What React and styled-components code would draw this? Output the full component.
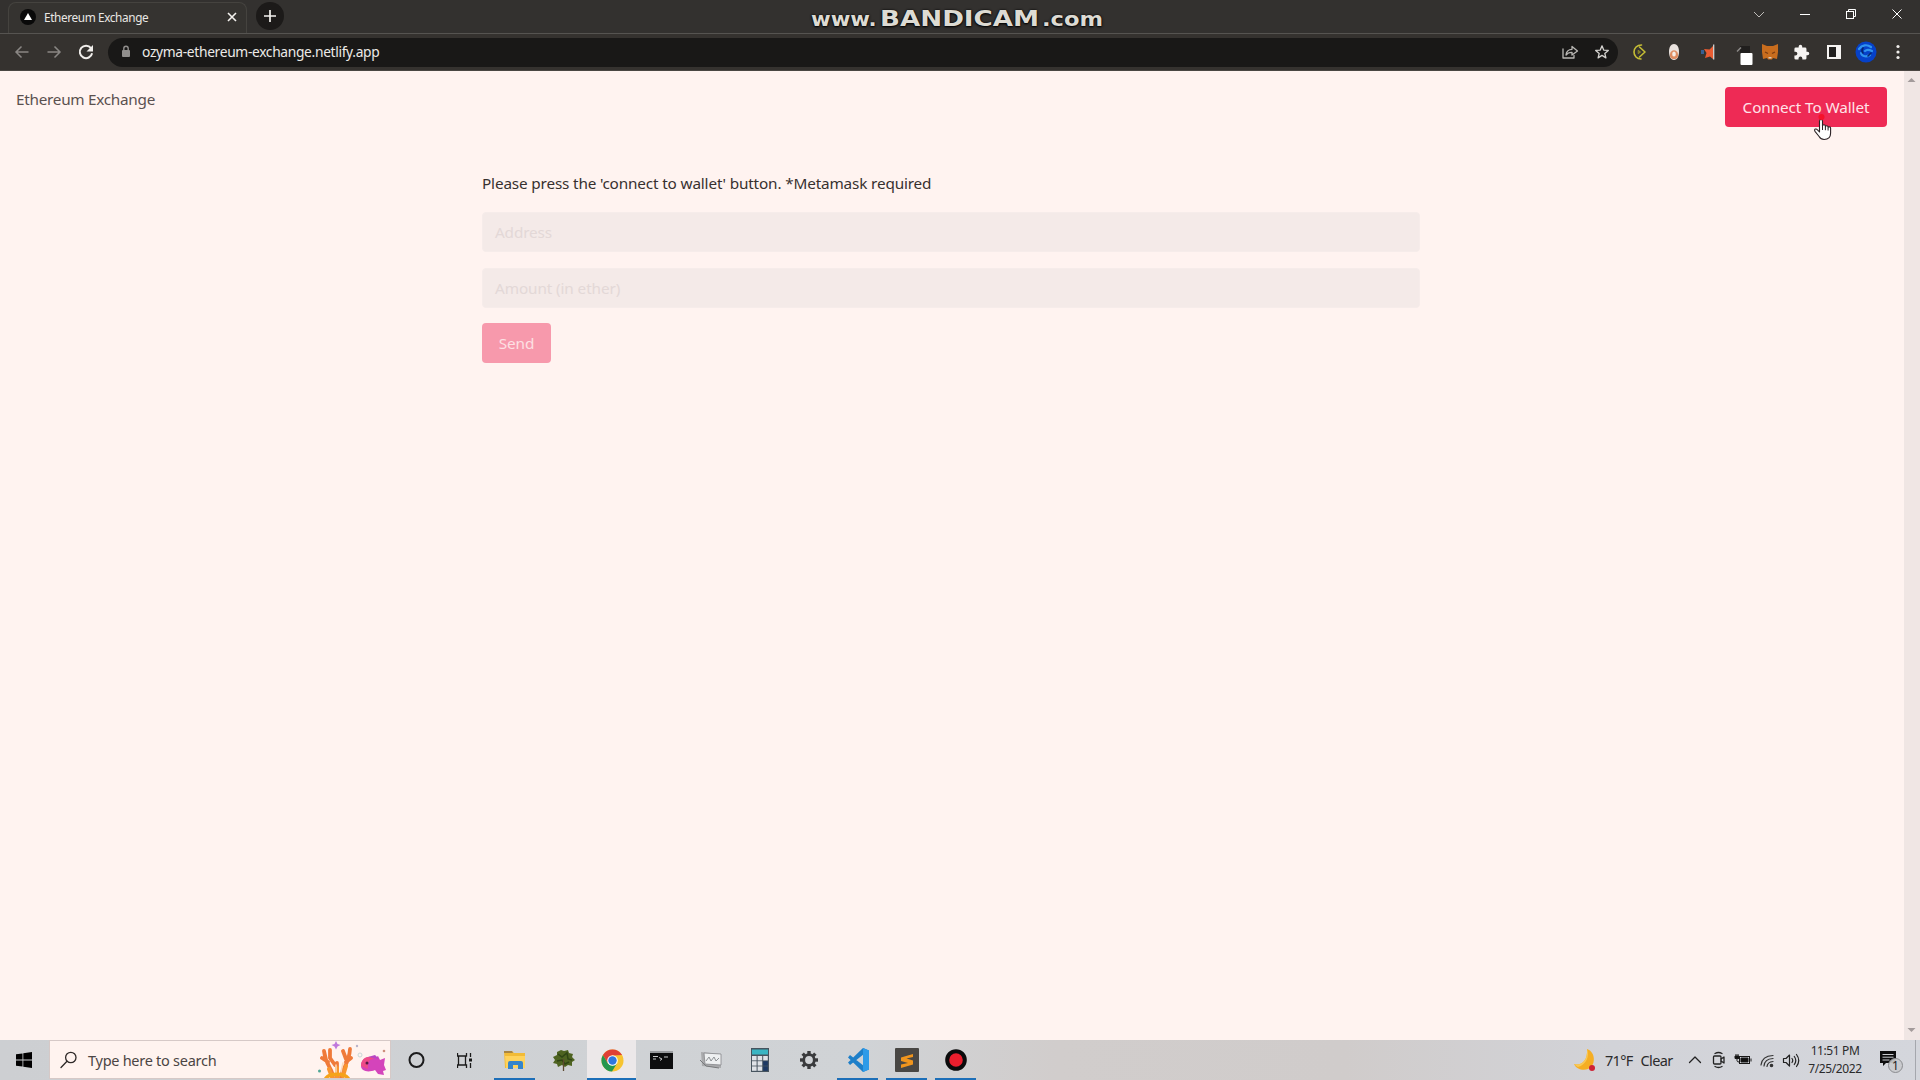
import React from "react";
import styled, { createGlobalStyle } from "styled-components";

const Global = createGlobalStyle`
  * { box-sizing: border-box; }
  body { margin: 0; background: #fff3f0; font-family: "Noto Sans", "Open Sans", sans-serif; overflow: hidden; }
`;

const Screen = styled.div`
  width: 1920px;
  height: 1080px;
  display: flex;
  flex-direction: column;
  position: relative;
  overflow: hidden;
`;

const Label = styled.span`
  white-space: nowrap;
  font-size: ${(p) => p.$size || 15.3}px;
  letter-spacing: ${(p) => p.$track || 0}px;
  color: ${(p) => p.$color || "inherit"};
`;

/* ---------- browser chrome ---------- */

const TitleBar = styled.header`
  height: 33px;
  flex: none;
  display: flex;
  align-items: flex-start;
  background: #33312f;
  padding-left: 8px;
`;

const Tab = styled.div`
  width: 239px;
  height: 31px;
  margin-top: 2px;
  border: 1px solid #45433f;
  border-bottom: 0;
  border-radius: 8px 8px 0 0;
  background: #353330;
  display: flex;
  align-items: center;
  padding: 0 8px 2px 11px;
`;

const TabTitle = styled.div`
  flex: 1;
  padding-left: 8px;
  color: #e9e7e4;
  line-height: 16px;
  display: flex;
`;

const NewTab = styled.div`
  width: 28px;
  height: 28px;
  margin: 2px 0 0 9px;
  border-radius: 50%;
  background: #1c1a19;
  display: grid;
  place-items: center;
`;

const WindowButtons = styled.div`
  margin-left: auto;
  height: 28px;
  display: flex;
  align-items: center;
`;

const WindowButton = styled.div`
  width: 46px;
  height: 28px;
  display: grid;
  place-items: center;
`;

const Toolbar = styled.div`
  height: 38px;
  flex: none;
  display: flex;
  align-items: center;
  background: #35322f;
  border-top: 1px solid #565451;
  border-bottom: 1px solid #4a4642;
  padding: 0 6px;
`;

const NavCell = styled.div`
  flex: none;
  width: 32px;
  height: 32px;
  display: grid;
  place-items: center;
`;

const UrlBar = styled.div`
  flex: none;
  width: 1510px;
  height: 29px;
  margin-left: 6px;
  border-radius: 15px;
  background: #191817;
  color: #eceae7;
  display: flex;
  align-items: center;
  padding-left: 13px;
`;

const UrlText = styled.div`
  flex: 1;
  padding: 0 0 1px 11px;
  line-height: 18px;
`;

const Extensions = styled.div`
  display: flex;
  align-items: center;
  margin-left: 5px;
`;

const Watermark = styled.div`
  position: absolute;
  top: 8px;
  left: 811px;
  display: flex;
  align-items: baseline;
  line-height: 22px;
  color: #dddbd3;
  font-family: "DejaVu Sans", sans-serif;
  font-weight: bold;
  text-shadow: 0 1px 2px #000, 0 0 2px #000;
`;

const Mark = styled.span`
  display: block;
  white-space: nowrap;
  width: ${(p) => p.$width}px;
  font-size: ${(p) => p.$size}px;
  transform: scaleX(${(p) => p.$stretch});
  transform-origin: left;
`;

/* ---------- page ---------- */

const Viewport = styled.div`
  flex: 1;
  display: flex;
  background: #fff3f0;
`;

const Page = styled.div`
  flex: 1;
  display: flex;
  flex-direction: column;
`;

const NavBar = styled.nav`
  height: 72px;
  display: flex;
  justify-content: space-between;
  align-items: flex-start;
  padding: 16px 17px 0 16px;
`;

const Brand = styled.div`
  color: #5a504f;
  line-height: 24px;
`;

const Button = styled.button`
  height: 40px;
  width: ${(p) => p.$width}px;
  border: 0;
  padding: 0;
  border-radius: 4px;
  font: 16px "Noto Sans", sans-serif;
  line-height: 24px;
  color: ${(p) => (p.$muted ? "#fde0e3" : "#ffe3e8")};
  background: ${(p) => (p.$muted ? "#f799ac" : "#ee2a55")};
`;

const Form = styled.form`
  width: 938px;
  margin: 28px 0 0 482px;
  display: flex;
  flex-direction: column;
  align-items: flex-start;
  gap: 15.5px;
`;

const Hint = styled.div`
  line-height: 24px;
  color: #37302f;
  margin-bottom: 1.5px;
`;

const Field = styled.div`
  width: 938px;
  height: 40px;
  border-radius: 4px;
  background: #f4eae8;
  border: 1px solid #f6ecea;
  color: #e3d8d7;
  padding: 0 12px;
  line-height: 39px;
`;

const ScrollTrack = styled.div`
  width: 16px;
  background: #f0e6e4;
  display: flex;
  flex-direction: column;
  align-items: center;
  justify-content: space-between;
  padding: 6px 1px 7px 0;
`;

/* ---------- taskbar ---------- */

const TaskBar = styled.footer`
  height: 40px;
  flex: none;
  display: flex;
  align-items: stretch;
  color: #2b2b2c;
  background: linear-gradient(90deg, #cdcfd2 0, #d0d3d6 45%, #d1cdcc 55%, #d0cccb 70%, #d2d3d8 84%, #d4d6dc 100%);
`;

const Start = styled.div`
  flex: none;
  width: 49px;
  padding-right: 1px;
  display: grid;
  place-items: center;
`;

const Search = styled.div`
  flex: none;
  width: 342px;
  height: 39px;
  background: #fff3ef;
  border: 1px solid #d6c9c7;
  display: flex;
  align-items: center;
  padding-left: 10px;
`;

const SearchText = styled.div`
  flex: 1;
  padding-left: 10px;
  color: #4b4544;
  line-height: 22px;
`;

const Task = styled.div`
  flex: none;
  width: 49px;
  padding-left: 2px;
  display: grid;
  place-items: center;
  background: ${(p) => (p.$active ? "#ece8e9" : "transparent")};
  box-shadow: ${(p) => (p.$active ? "inset 0 -2px #1d6fb8" : "none")};
`;

const Running = styled.div`
  width: 41px;
  height: 40px;
  display: grid;
  place-items: center;
  border-bottom: 2px solid #1d6fb8;
  padding-top: 2px;
`;

const Tray = styled.div`
  margin-left: auto;
  display: flex;
  align-items: center;
`;

const Weather = styled.div`
  display: flex;
  align-items: center;
  gap: 8px;
  width: 109px;
`;

const TrayCell = styled.div`
  display: grid;
  place-items: center;
`;

const Clock = styled.div`
  width: 68px;
  display: flex;
  flex-direction: column;
  align-items: center;
  line-height: 18px;
`;

const Notice = styled.div`
  width: 46px;
  padding-right: 2px;
  display: grid;
  place-items: center;
`;

const Peek = styled.div`
  width: 5px;
  align-self: stretch;
  border-left: 1px solid #a5a7ad;
`;

const Pointer = styled.div`
  position: absolute;
  left: 1813px;
  top: 113px;
  line-height: 0;
`;

const line = { fill: "none", strokeLinecap: "round", strokeLinejoin: "round" };

const Favicon = () => (
  <svg width="16" height="16" viewBox="0 0 16 16">
    <circle cx="8" cy="8" r="8" fill="#090909" />
    <path d="M8 4l4 7H4z" fill="#fff" />
  </svg>
);

const Arrow = ({ flip }) => (
  <svg width="16" height="16" viewBox="0 0 16 16" stroke="#8a8784" strokeWidth="1.5" fill="none">
    <path d={flip ? "M1.5 8h12.5M8.5 2.5L14 8l-5.500 5.500" : "M14.500 8H2M7.500 2.500L2 8l5.500 5.500"} />
  </svg>
);

const Reload = () => (
  <svg width="18" height="18" viewBox="0 0 18 18">
    <path d="M14 5.200A6.200 6.200 0 1 0 15.100 10.200" fill="none" stroke="#f0eeeb" strokeWidth="2" />
    <path d="M16 2v6.500H9.500z" fill="#f0eeeb" />
  </svg>
);

const Lock = () => (
  <svg width="10" height="14" viewBox="0 0 10 14">
    <rect x="1" y="5" width="8" height="7" rx="1" fill="#918f8d" />
    <path d="M2.800 5V3.500a2.200 2.200 0 0 1 4.400 0V5" fill="none" stroke="#918f8d" strokeWidth="1.400" />
  </svg>
);

const Share = () => (
  <svg width="18" height="16" viewBox="0 0 18 16" {...line} stroke="#b9b7b4" strokeWidth="1.300">
    <path d="M2 5v9h11v-2.500" />
    <path d="M5 11c.4-4 2.600-5.600 6-5.700V2.500L16.500 7 11 11V8.300C8.500 8.200 6.500 9 5 11z" />
  </svg>
);

const Star = () => (
  <svg width="16" height="16" viewBox="0 0 16 16" {...line} stroke="#d5d3d0" strokeWidth="1.300">
    <path d="M8 1.800l1.700 4.300 4.600.3-3.500 3 1.100 4.500L8 11.400l-3.900 2.500 1.100-4.500-3.500-3 4.600-.3z" />
  </svg>
);

const extensionIcons = [
  { w: 34, icon: (
    <svg width="18" height="18" viewBox="0 0 18 18" {...line} stroke="#c5bd35" strokeWidth="1.600">
      <path d="M10.500 2C6 2 3 5 3 9s3 7 7 7" />
      <path d="M8.500 4L14 9l-5.500 5" />
      <path d="M7.500 7.500L9.500 9l-2 1.500z" fill="#8d8927" stroke="#8d8927" strokeWidth="1" />
    </svg>) },
  { w: 34, icon: (
    <svg width="14" height="18" viewBox="0 0 14 18">
      <path d="M7 1c3 0 5 3 5 7.500S10.500 17 7 17s-5-4-5-8.500S4 1 7 1z" fill="#e9e2de" />
      <path d="M3 11c1-5 7-5 8 0 .5 3-1 5-4 5s-4.500-2-4-5z" fill="#dd8d62" />
      <ellipse cx="7" cy="11" rx="1.800" ry="2.600" fill="#f4ece6" />
    </svg>) },
  { w: 34, icon: (
    <svg width="18" height="18" viewBox="0 0 18 18">
      <path d="M2 7h3v4H2z" fill="#365f94" />
      <path d="M14 3v13l-3-2.500-5 1.500 1.500-5L5 6l5.500.5z" fill="#e95c32" />
      <path d="M14.700 1.500v15" stroke="#ddd" strokeWidth="1.200" />
    </svg>) },
  { w: 29, icon: (
    <svg width="28" height="28" viewBox="0 0 28 28">
      <path d="M14 8h10v7H14z" fill="#211f1e" />
      <path d="M11 13.500l4-4" stroke="#8d8b88" strokeWidth="1.500" />
      <rect x="14.500" y="15" width="12" height="12" rx="1" fill="#fff" />
    </svg>) },
  { w: 32, icon: (
    <svg width="18" height="16" viewBox="0 0 18 16">
      <path d="M1 0l5 2h6l5-2v8l-1 7-4-1-1 1.500H7L6 14l-4 1-1-7z" fill="#c96d1e" />
      <path d="M4 8l3 1.500M14 8l-3 1.500" stroke="#7a3c12" strokeWidth="1.300" />
      <path d="M7.500 13h3v1.500h-3z" fill="#d8c9b8" />
    </svg>) },
  { w: 31, icon: (
    <svg width="17" height="17" viewBox="0 0 24 24" fill="#f6f4f2">
      <path d="M20.500 11H19V7a2 2 0 0 0-2-2h-4V3.500a2.500 2.500 0 0 0-5 0V5H4a2 2 0 0 0-2 2v3.800h1.500a2.700 2.700 0 0 1 0 5.400H2V20a2 2 0 0 0 2 2h3.800v-1.500a2.700 2.700 0 0 1 5.400 0V22H17a2 2 0 0 0 2-2v-4h1.500a2.500 2.500 0 0 0 0-5z" />
    </svg>) },
  { w: 33, icon: (
    <svg width="16" height="16" viewBox="0 0 16 16">
      <rect x="2" y="2" width="12" height="12" fill="#22201f" stroke="#f6f4f2" strokeWidth="2" />
      <rect x="10" y="2" width="4" height="12" fill="#f6f4f2" />
    </svg>) },
  { w: 32, icon: (
    <svg width="22" height="22" viewBox="0 0 22 22">
      <circle cx="11" cy="11" r="10.500" fill="#0641c8" />
      <path d="M4 8c3-4 8-5 12-2M6 12c1 4 6 4 9 2M10 10c2-2 5-1 7 0" {...line} stroke="#3093ee" strokeWidth="2.200" />
      <path d="M8 7q-2 3 0 5M13 15l3-3" {...line} stroke="#06236e" strokeWidth="1.600" />
    </svg>) },
  { w: 32, icon: (
    <svg width="4" height="16" viewBox="0 0 4 16" fill="#f0eeeb">
      <circle cx="2" cy="2.500" r="1.600" /><circle cx="2" cy="8" r="1.600" /><circle cx="2" cy="13.500" r="1.600" />
    </svg>) },
];

const windowIcons = [
  <path key="c" d="M1 4l5 5 5-5" stroke="#bdbbb8" />,
  <path key="m" d="M1 6.500h10" stroke="#fff" />,
  <g key="r" stroke="#fff"><rect x="1.500" y="3.500" width="7" height="7" /><path d="M3.500 3.500v-2h7v7h-2" /></g>,
  <path key="x" d="M1.500 1.500l9 9M10.500 1.500l-9 9" stroke="#fff" />,
];

const Windows = () => (
  <svg width="16" height="16" viewBox="0 0 16 16" fill="#000">
    <path d="M0 2.300L6.500 1.400v6.200H0zM7.300 1.300L16 0v7.600H7.300zM0 8.400h6.500v6.200L0 13.700zM7.300 8.400H16V16l-8.700-1.300z" />
  </svg>
);

const Magnifier = () => (
  <svg width="18" height="18" viewBox="0 0 18 18" {...line} stroke="#2e2928" strokeWidth="1.300">
    <circle cx="10.800" cy="6.500" r="5.200" /><path d="M7 10.300L1 16.500" />
  </svg>
);

const Reef = () => (
  <svg width="72" height="37" viewBox="0 0 72 37">
    <g {...line}>
      <path d="M19 37V22M15 37C15 27 8 26 6 10M10 21L4 17M23 37C23 27 31 25 32 8M33 17l-5 4M25 10l3 8M12 9v8l5 7" stroke="#ef7a3a" strokeWidth="3.800" />
      <path d="M19 36V27M14 36l-3-8M25 35l3-10" stroke="#f9962f" strokeWidth="4" />
      <path d="M18 33v-9M23 31l2-9" stroke="#fbd9b8" strokeWidth="1.500" />
      <path d="M8 37c4-5 18-5 22 0" stroke="#f5a31a" strokeWidth="3.500" />
    </g>
    <path d="M18 0l1.500 3 3 1-3 1.500-1.500 3-1.500-3-3-1.500 3-1z" fill="#bf78dc" />
    <circle cx="1.500" cy="30" r="1.500" fill="#4fa796" />
    <circle cx="39" cy="5" r="1.200" fill="#b9b3c9" /><circle cx="42" cy="14" r="2" fill="none" stroke="#c9d7d6" />
    <circle cx="66" cy="10" r="1.300" fill="#cd8e7c" />
    <path d="M43 25c0-7 6-11 14-8l3-2 2 4 5-2-1 7 2 5-3 1 1 4-6-1-3-4c-7 3-14 1-14-4z" fill="#d444bb" />
    <path d="M43 25c0-8 7-11 14-8-5 1-8 4-7 11z" fill="#ee4c88" />
    <path d="M50 16l7-2 4 4z" fill="#b847c4" />
    <circle cx="49" cy="22" r="1.500" fill="#571b45" />
  </svg>
);

const TaskView = () => (
  <svg width="17" height="17" viewBox="0 0 17 17" fill="none" stroke="#1a1a1a" strokeWidth="1.300">
    <path d="M.5 1v3h9V1M.5 16v-3h9v3M1.500 4v9M8.500 4v9M13.500 1v4M13.500 11v5" />
    <path d="M13.500 6.500v3" strokeWidth="3" />
  </svg>
);

const Folder = () => (
  <svg width="24" height="20" viewBox="0 0 24 20">
    <path d="M1 1h8l2 2h11v15H2z" fill="#f2bb36" />
    <path d="M1 1h8l1 2H1z" fill="#a98543" />
    <path d="M2 6h20v12H3z" fill="#ffd35d" />
    <path d="M5 19v-6q0-2 2-2h11q2 0 2 2v6h-5v-4h-5v4z" fill="#3585cc" />
  </svg>
);

const Tree = () => (
  <svg width="24" height="24" viewBox="0 0 24 24">
    <path d="M9 2l3 1 4-1 1 3 4 1-1 3 3 3-3 2 0 4-4-1-3 2-3-2-4 2-1-3-4-1 2-3-2-3 4-2 0-3z" fill="#4e6321" />
    <path d="M6 6l4 3 5-4 1 6 4 1M5 13l5-1 3 4 4-2" stroke="#2f4514" strokeWidth="1.500" fill="none" />
    <path d="M11.500 11v12" stroke="#5d4a31" strokeWidth="1.300" />
  </svg>
);

const ChromeLogo = () => (
  <svg width="23" height="23" viewBox="0 0 48 48">
    <circle cx="24" cy="24" r="23" fill="#f7c431" />
    <path d="M4 12.500A23 23 0 0 1 44 12.500L24 13.500 14 29z" fill="#df4036" />
    <path d="M4 12.500A23 23 0 0 0 23 47L33.500 29.500 24 34.500 14.500 30z" fill="#24974e" />
    <circle cx="24" cy="24" r="11" fill="#fff" />
    <circle cx="24" cy="24" r="8.800" fill="#2f77df" />
  </svg>
);

const Terminal = () => (
  <svg width="23" height="18" viewBox="0 0 23 18">
    <rect width="23" height="18" fill="#0d0e0f" />
    <path d="M0 0h23v2H0z" fill="#9a9da0" />
    <path d="M3 5.500h5M9 6.500l3 1.500-2 1.500M14 6h4M3 8h3" stroke="#c9cacb" fill="none" />
  </svg>
);

const Monitor = () => (
  <svg width="24" height="20" viewBox="0 0 24 20">
    <path d="M2 2l20 2v14L3 16z" fill="#a9aaac" />
    <path d="M5 3l17 1v11L6 14z" fill="#eef0f1" stroke="#85878a" strokeWidth=".8" />
    <path d="M7 11l3-4 2 4 3-4 2 4 3-3" stroke="#8d9194" fill="none" />
    <path d="M1 10l6 6 13 2" stroke="#77797b" fill="none" />
  </svg>
);

const Calculator = () => (
  <svg width="19" height="24" viewBox="0 0 19 24">
    <rect x="1" y="0" width="18" height="24" fill="#47545f" />
    <rect x="2" y="1.500" width="16" height="5" fill="#39b5c3" />
    {[0, 1, 2].flatMap((r) => [0, 1, 2].map((c) => (
      <rect key={`${r}${c}`} x={2 + c * 5.600} y={8 + r * 5.200} width="4.600" height="4.400" fill={c === 2 && r > 0 ? "#1c3964" : "#dfe3e8"} />
    )))}
  </svg>
);

const Gear = () => (
  <svg width="20" height="20" viewBox="0 0 20 20" stroke="#3a3b3d">
    <circle cx="10" cy="10" r="5.300" fill="none" strokeWidth="2.800" />
    {[0, 45, 90, 135, 180, 225, 270, 315].map((a) => (
      <path key={a} d="M10 1v3.500" strokeWidth="3.400" transform={`rotate(${a} 10 10)`} />
    ))}
  </svg>
);

const VsCode = () => (
  <svg width="24" height="24" viewBox="0 0 24 24">
    <path d="M17 0l6 2.500v19L17 24 2 9.500 4 7l14 11V6L4 17l-2-2.500z" fill="#1d7fc9" />
    <path d="M17 0l6 2.500v19L17 24z" fill="#2e9be8" />
  </svg>
);

const Sublime = () => (
  <svg width="24" height="24" viewBox="0 0 24 24">
    <rect width="24" height="24" rx="1" fill="#494744" />
    <path d="M18 6L6 9.500v3.500l7 2-7 1.500V20l12-3.500v-4L11.500 10.500 18 9z" fill="#f0951d" />
  </svg>
);

const Recorder = () => (
  <svg width="24" height="24" viewBox="0 0 24 24">
    <circle cx="12" cy="12" r="8.800" fill="#ea1e2d" stroke="#0b0b0c" strokeWidth="4" />
  </svg>
);

const Cortana = () => (
  <svg width="18" height="18" viewBox="0 0 18 18">
    <circle cx="8.500" cy="9" r="7" fill="none" stroke="#1c1c1d" strokeWidth="2" />
  </svg>
);

const Moon = () => (
  <svg width="24" height="24" viewBox="0 0 24 24">
    <path d="M14 1c9 3 9 17 1 20-5 2-12 0-14-5 7 2 14-3 13-15z" fill="#f5ae24" />
    <path d="M14 1c3 7-1 16-9 18-2-1-3-2-4-3 7 2 14-3 13-15z" fill="#f9c955" />
    <circle cx="19" cy="20" r="3" fill="#cf2336" />
  </svg>
);

const traySymbols = [
  { w: 25, icon: <svg width="14" height="14" viewBox="0 0 14 14" {...line} stroke="#222" strokeWidth="1.300"><path d="M1.500 9.500L7 4l5.500 5.500" /></svg> },
  { w: 24, icon: <svg width="14" height="18" viewBox="0 0 14 18" {...line} stroke="#222" strokeWidth="1.300"><rect x="1.500" y="5" width="7.500" height="8" rx="1" /><path d="M9 8l3-2v6L9 10M3 2.500q3.500-2 7 0M3 15.500q3.500 2 7 0" /></svg> },
  { w: 24, icon: <svg width="18" height="14" viewBox="0 0 18 14" fill="none" stroke="#181818"><rect x="5.500" y="3.500" width="10" height="7" /><path d="M7 5h7v4H7z" fill="#111" /><path d="M17 5.500v3M2 1v2M4 1v2M3 5v2.500q0 1.500 2 1.500" /><path d="M1 3h4v2.500H1z" fill="#111" /></svg> },
  { w: 25, icon: <svg width="15" height="15" viewBox="0 0 15 15" {...line} stroke="#333" strokeWidth="1.200"><path d="M1 12Q2 3 13 2.500M4 13Q4.500 6 13 5.500M7 13.500Q7.500 9 13 8.500" /><circle cx="11.500" cy="12.500" r="1.200" fill="#333" /></svg> },
  { w: 21, icon: <svg width="18" height="15" viewBox="0 0 18 15" {...line} stroke="#222" strokeWidth="1.200"><path d="M1.500 5.500v4H4L7.500 13V2L4 5.500zM10 5.500q1.500 2 0 4M12.300 3.500q3 4 0 8M14.500 1.500q4.500 6 0 12" /></svg> },
];

const Bell = () => (
  <svg width="26" height="26" viewBox="0 0 26 26">
    <path d="M2 4h16v12H8l-3 3v-3H2z" fill="#0d0d0e" />
    <path d="M4.500 7.500h11M4.500 10.200h11M4.500 13h7" stroke="#c9cbcf" strokeWidth="1" />
    <circle cx="17.500" cy="18.500" r="7" fill="#c9cacd" fillOpacity=".92" stroke="#8b8c90" />
    <text x="17.500" y="23" fontSize="12" fontFamily="Noto Sans, sans-serif" textAnchor="middle" fill="#222">1</text>
  </svg>
);

const tasks = [
  { icon: <Cortana /> }, { icon: <TaskView /> }, { icon: <Folder />, running: true }, { icon: <Tree /> },
  { icon: <ChromeLogo />, active: true }, { icon: <Terminal /> }, { icon: <Monitor /> }, { icon: <Calculator /> },
  { icon: <Gear /> }, { icon: <VsCode />, running: true }, { icon: <Sublime />, running: true }, { icon: <Recorder />, running: true },
];

const HandCursor = () => (
  <svg width="20" height="28" viewBox="0 0 20 28">
    <path d="M6.500 16V8.200q0-1.700 1.500-1.700t1.500 1.700V13q0-1.200 1.400-1.200T12.400 13v.8q.1-1.100 1.300-1.100t1.400 1.200v.8q.2-1 1.300-1 1.200.1 1.200 1.400V20q0 6.500-6.500 6.500-3.300 0-5-3L2 18.300q-.9-1.600.3-2.200 1.200-.5 2.200.7L6.500 19z" fill="#fff" stroke="#2b2225" strokeWidth="1.100" strokeLinejoin="round" />
    <path d="M9.500 13v4M12.400 14v3.200M15.100 15v2.500" stroke="#2b2225" />
    <circle cx="8.500" cy="4" r="3" fill="#f5122b" />
  </svg>
);

const ScrollArrow = ({ down }) => (
  <svg width="9" height="6" viewBox="0 0 9 6"><path d={down ? "M.5 1h8L4.500 5z" : "M.5 5h8L4.500 1z"} fill="#a39b9b" /></svg>
);

export default function App() {
  return (
    <Screen>
      <Global />
      <TitleBar>
        <Tab>
          <Favicon />
          <TabTitle><Label $size={11.8} $track={-0.38}>Ethereum Exchange</Label></TabTitle>
          <svg width="12" height="12" viewBox="0 0 12 12" stroke="#f4f2ef" strokeWidth="1.600"><path d="M2 2l8 8M10 2l-8 8" /></svg>
        </Tab>
        <NewTab><svg width="12" height="12" viewBox="0 0 12 12" stroke="#f4f2ef" strokeWidth="1.700"><path d="M6 0v12M0 6h12" /></svg></NewTab>
        <WindowButtons>
          {windowIcons.map((icon, i) => (
            <WindowButton key={i}><svg width="12" height="12" viewBox="0 0 12 12" fill="none">{icon}</svg></WindowButton>
          ))}
        </WindowButtons>
      </TitleBar>
      <Toolbar>
        <NavCell><Arrow /></NavCell>
        <NavCell><Arrow flip /></NavCell>
        <NavCell><Reload /></NavCell>
        <UrlBar>
          <Lock />
          <UrlText><Label $size={13.8} $track={-0.33}>ozyma-ethereum-exchange.netlify.app</Label></UrlText>
          <NavCell><Share /></NavCell>
          <NavCell><Star /></NavCell>
        </UrlBar>
        <Extensions>
          {extensionIcons.map((e, i) => (
            <NavCell key={i} style={{ width: e.w }}>{e.icon}</NavCell>
          ))}
        </Extensions>
      </Toolbar>
      <Viewport>
        <Page>
          <NavBar>
            <Brand><Label $track={-0.27}>Ethereum Exchange</Label></Brand>
            <Button $width={162}><Label $track={-0.1}>Connect To Wallet</Label></Button>
          </NavBar>
          <Form>
            <Hint><Label $track={-0.15}>Please press the 'connect to wallet' button. *Metamask required</Label></Hint>
            <Field><Label $track={-0.15}>Address</Label></Field>
            <Field><Label $track={-0.1}>Amount (in ether)</Label></Field>
            <Button type="button" $muted $width={69}><Label $track={-0.1}>Send</Label></Button>
          </Form>
        </Page>
        <ScrollTrack><ScrollArrow /><ScrollArrow down /></ScrollTrack>
      </Viewport>
      <TaskBar>
        <Start><Windows /></Start>
        <Search>
          <Magnifier />
          <SearchText><Label $size={14.5} $track={-0.27}>Type here to search</Label></SearchText>
          <Reef />
        </Search>
        {tasks.map((t, i) => (
          <Task key={i} $active={t.active}>{t.running ? <Running>{t.icon}</Running> : t.icon}</Task>
        ))}
        <Tray>
          <Weather><Moon /><Label $size={14.5} $track={-0.7}>71°F</Label><Label $size={14.5} $track={-0.6}>Clear</Label></Weather>
          {traySymbols.map((s, i) => (
            <TrayCell key={i} style={{ width: s.w }}>{s.icon}</TrayCell>
          ))}
          <Clock>
            <Label $size={12} $track={-0.4}>11:51 PM</Label>
            <Label $size={12} $track={-0.4}>7/25/2022</Label>
          </Clock>
          <Notice><Bell /></Notice>
          <Peek />
        </Tray>
      </TaskBar>
      <Watermark>
        <Mark $size={19} $width={69} $stretch={1.12}>www.</Mark>
        <Mark $size={22} $width={162} $stretch={1.19}>BANDICAM</Mark>
        <Mark $size={19} $width={62} $stretch={1.19}>.com</Mark>
      </Watermark>
      <Pointer><HandCursor /></Pointer>
    </Screen>
  );
}
